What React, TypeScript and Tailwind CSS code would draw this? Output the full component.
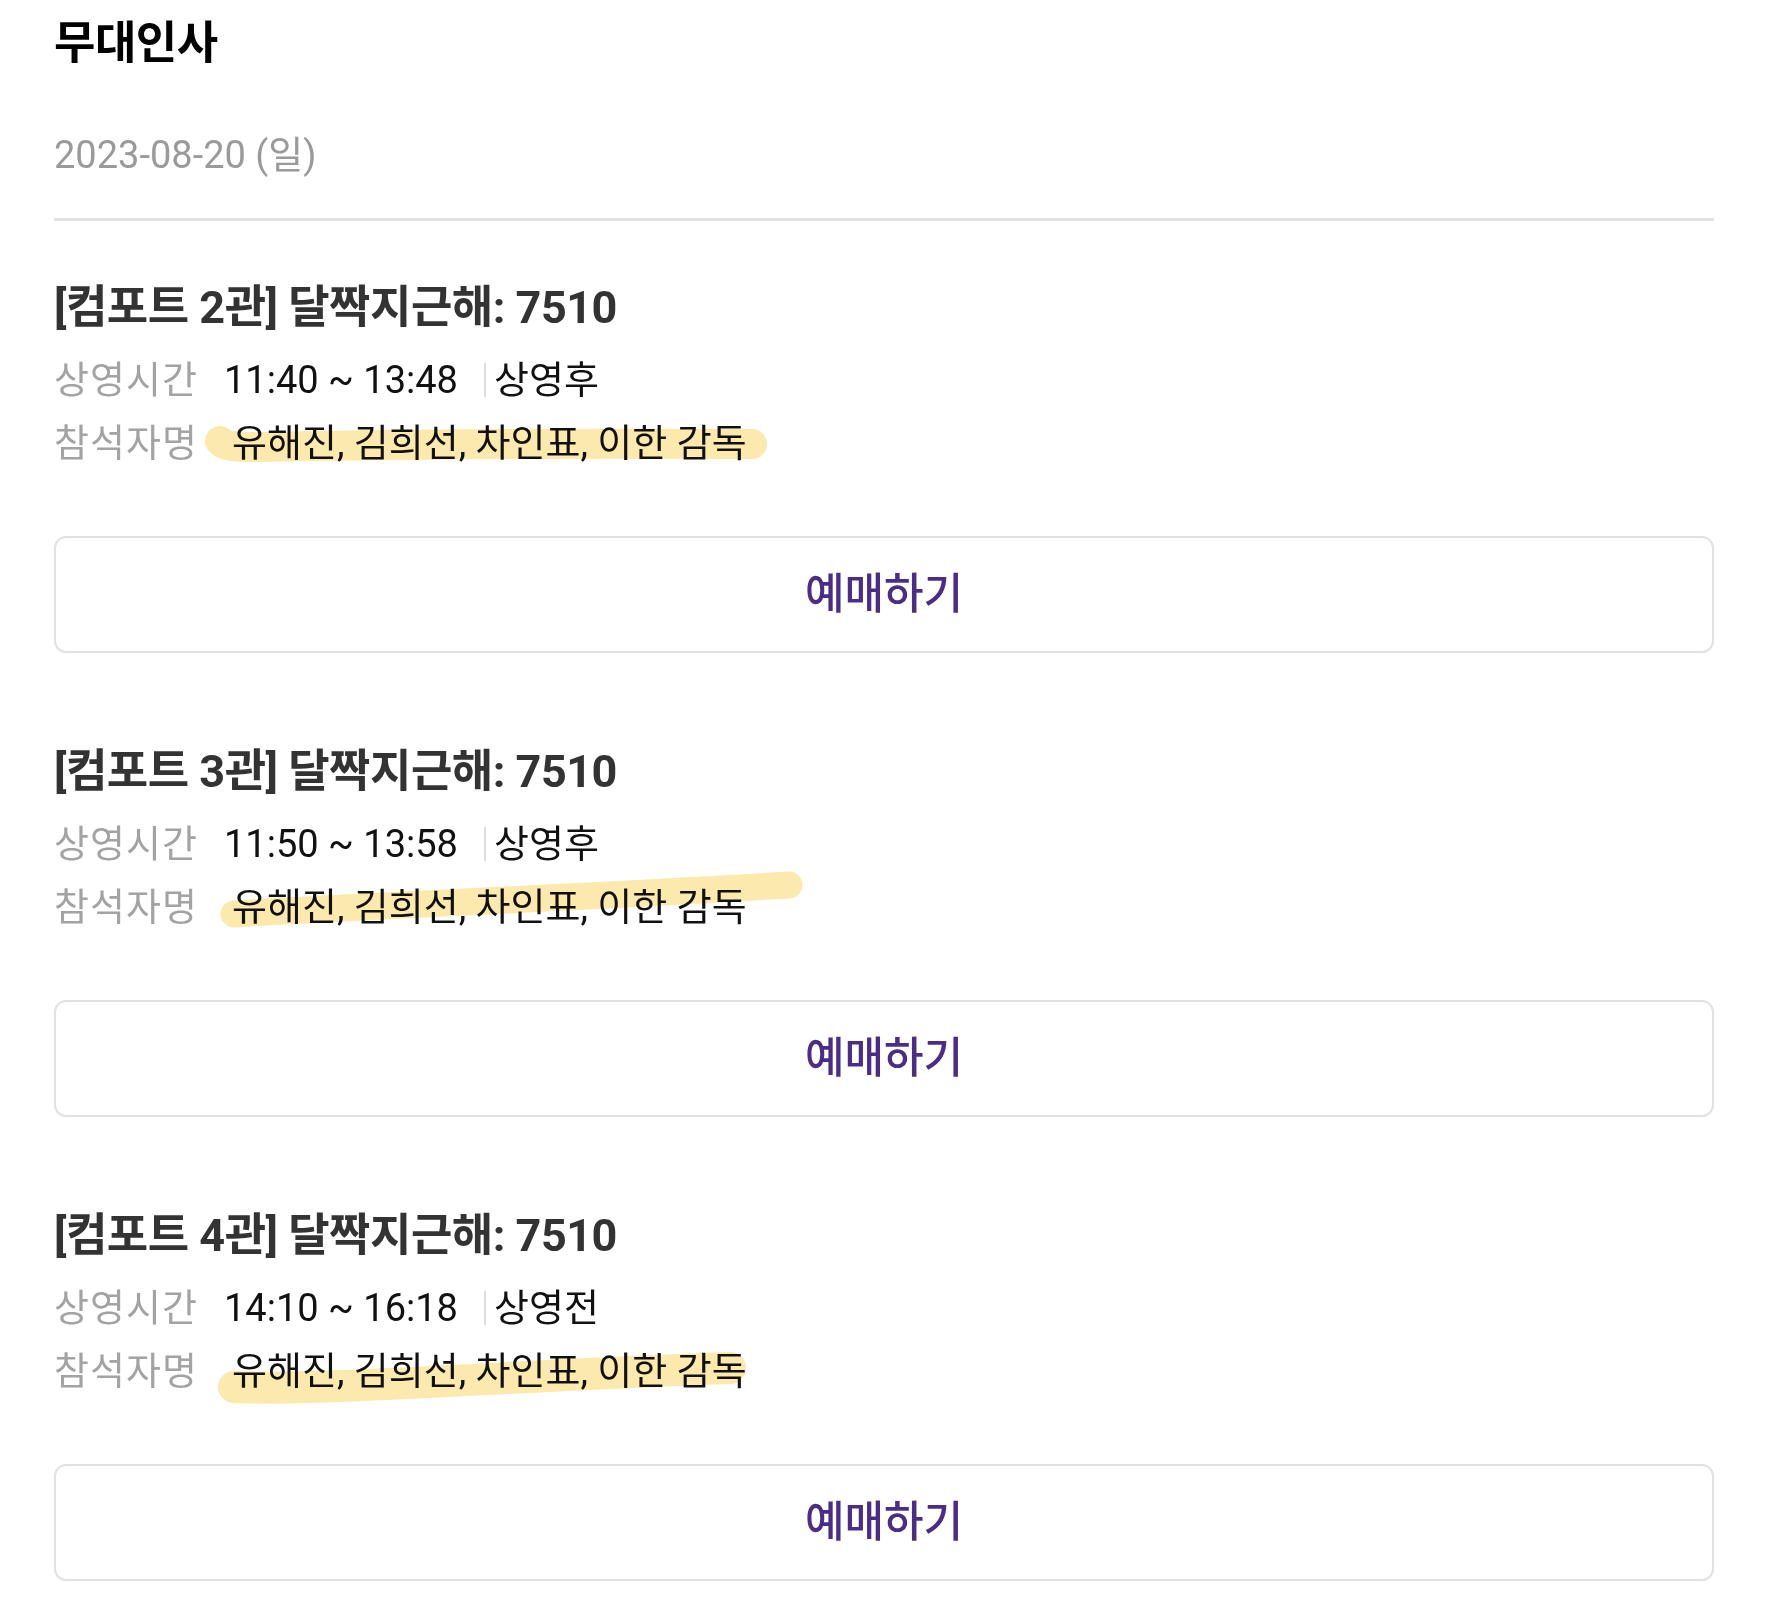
import { FC } from 'react';

interface IShowing {
  hall: string;
  time: string;
  status: string;
  mark: { d: string; w: number };
}

const showings: IShowing[] = [
  { hall: '2관', time: '11:40 ~ 13:48', status: '상영후', mark: { d: 'M166 22 C172 30 190 28 260 27 C420 25 560 24 698 25', w: 30 } },
  { hall: '3관', time: '11:50 ~ 13:58', status: '상영후', mark: { d: 'M180 31 C310 23 520 15 735 2', w: 27 } },
  { hall: '4관', time: '14:10 ~ 16:18', status: '상영전', mark: { d: 'M180 40 C270 44 430 30 676 21', w: 32 } },
];

const ShowingCard: FC<{ item: IShowing }> = ({ item }) => {
  return (
    <div className="flex flex-col">
      <h2 className="text-[45px] leading-[52px] font-bold tracking-[-0.5px] text-[#333333]">
        [컴포트 {item.hall}] 달짝지근해: 7510
      </h2>
      <div className="mt-[22px] flex h-[48px] items-center text-[38px]">
        <span className="w-[170px] shrink-0 tracking-[1px] text-[#a3a3a3]">상영시간</span>
        <span className="text-[#111111]">{item.time}</span>
        <span className="mr-[8px] ml-[26px] h-[34px] w-[2px] bg-[#dedede]" />
        <span className="text-[#111111]">{item.status}</span>
      </div>
      <div className="relative mt-[15px] flex h-[48px] items-center text-[38px]">
        <span className="w-[178px] shrink-0 tracking-[1px] text-[#a3a3a3]">참석자명</span>
        <span className="text-[#111111]">유해진, 김희선, 차인표, 이한 감독</span>
        <svg
          className="pointer-events-none absolute top-0 left-0 overflow-visible mix-blend-multiply"
          width="800"
          height="48"
        >
          <path d={item.mark.d} fill="none" stroke="#fce9ad" strokeWidth={item.mark.w} strokeLinecap="round" strokeLinejoin="round" />
        </svg>
      </div>
      <button className="mt-[69px] flex h-[117px] w-full items-center justify-center rounded-[12px] border-2 border-[#e1e1e1] bg-white text-[43px] font-medium text-[#4b2d88]">
        예매하기
      </button>
    </div>
  );
};

const App: FC = () => {
  return (
    <div className="min-h-screen bg-white px-[54px] pb-[20px] font-[Roboto,'Noto_Sans_CJK_KR',sans-serif] text-black">
      <h1 className="pt-[18px] text-[45px] leading-[52px] font-bold tracking-[-0.5px]">무대인사</h1>
      <div className="mt-[59px] text-[38px] leading-[52px] text-[#9a9a9a]">2023-08-20 (일)</div>
      <div className="mt-[37px] h-[3px] w-full bg-[#e2e2e2]" />
      <div className="mt-[61px] flex flex-col gap-[93px]">
        {showings.map((s) => (
          <ShowingCard key={s.hall} item={s} />
        ))}
      </div>
    </div>
  );
};

export default App;
